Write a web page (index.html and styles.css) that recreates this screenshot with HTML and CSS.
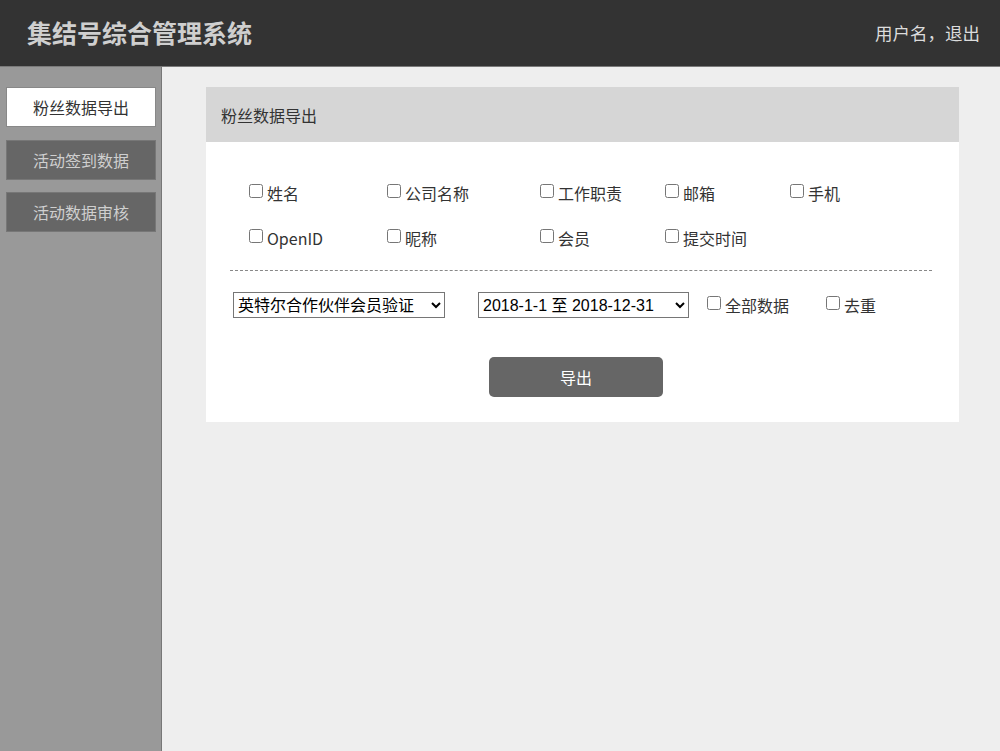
FILE: index.html
```html
<!DOCTYPE html>
<html lang="zh-CN">
<head>
<meta charset="utf-8">
<title>集结号综合管理系统</title>
<link rel="stylesheet" href="styles.css">
</head>
<body>
<header class="topbar">
  <div class="brand">集结号综合管理系统</div>
  <div class="user">用户名，退出</div>
</header>
<div class="layout">
  <nav class="sidebar">
    <a class="nav-item active">粉丝数据导出</a>
    <a class="nav-item">活动签到数据</a>
    <a class="nav-item">活动数据审核</a>
  </nav>
  <main class="main">
    <section class="panel">
      <div class="panel-head">粉丝数据导出</div>
      <div class="panel-body">
        <div class="fields">
          <label class="chk"><input type="checkbox">姓名</label>
          <label class="chk"><input type="checkbox">公司名称</label>
          <label class="chk"><input type="checkbox">工作职责</label>
          <label class="chk"><input type="checkbox">邮箱</label>
          <label class="chk"><input type="checkbox">手机</label>
          <label class="chk"><input type="checkbox">OpenID</label>
          <label class="chk"><input type="checkbox">昵称</label>
          <label class="chk"><input type="checkbox">会员</label>
          <label class="chk"><input type="checkbox">提交时间</label>
        </div>
        <div class="filters">
          <select class="sel sel-activity"><option>英特尔合作伙伴会员验证</option></select>
          <select class="sel sel-date"><option>2018-1-1 至 2018-12-31</option></select>
          <label class="chk chk-all"><input type="checkbox">全部数据</label>
          <label class="chk"><input type="checkbox">去重</label>
        </div>
        <div class="actions">
          <button class="btn">导出</button>
        </div>
      </div>
    </section>
  </main>
</div>
</body>
</html>
```
FILE: styles.css
```css
* { box-sizing: border-box; }
html, body { margin: 0; padding: 0; height: 100%; }
body {
  font-family: "Noto Sans CJK SC", "Noto Sans", sans-serif;
  background: #eeeeee;
  color: #333;
}
.topbar {
  height: 67px;
  background: #333333;
  border-bottom: 1px solid #7a7a7a;
  display: flex;
  align-items: center;
  justify-content: space-between;
  padding: 0 20px 2px 27px;
}
.brand {
  font-size: 25px;
  font-weight: bold;
  color: #cfcfcf;
}
.user {
  font-size: 17.5px;
  color: #dcdcdc;
}
.layout {
  display: flex;
  height: calc(100% - 67px);
}
.sidebar {
  width: 162px;
  background: #999999;
  border-right: 1px solid #777777;
  padding: 20px 5px 0 6px;
  display: flex;
  flex-direction: column;
  gap: 12.5px;
}
.nav-item {
  display: flex;
  align-items: center;
  justify-content: center;
  height: 40px;
  width: 150px;
  background: #666666;
  border: 1px solid #777777;
  color: #cfcfcf;
  font-size: 16px;
}
.nav-item.active {
  background: #ffffff;
  border-color: #888888;
  color: #333333;
}
.main {
  flex: 1;
  padding: 20px 41px 0 44px;
}
.panel {
  width: 753px;
  background: #ffffff;
}
.panel-head {
  height: 55px;
  background: #d6d6d6;
  display: flex;
  align-items: center;
  padding-left: 15px;
  font-size: 16px;
  color: #333;
}
.panel-body {
  padding: 28px 27px 25px 24px;
}
.fields {
  display: grid;
  grid-template-columns: 138px 153px 125px 125px auto;
  grid-auto-rows: 45px;
  padding-left: 19px;
  padding-bottom: 10px;
  border-bottom: 1px dashed #888888;
}
.chk {
  display: flex;
  align-items: center;
  font-size: 16px;
  color: #333;
  white-space: nowrap;
}
.chk input {
  width: 14px;
  height: 14px;
  margin: 0 4px 0 0;
  position: relative;
  top: -2px;
}
.filters {
  display: flex;
  align-items: center;
  height: 26px;
  margin-top: 21px;
  padding-left: 3px;
}
.sel {
  height: 26px;
  font-family: "Liberation Sans", "Noto Sans CJK SC", sans-serif;
  font-size: 16px;
  color: #000;
  background: #fff;
  border: 1px solid #767676;
  border-radius: 0;
}
.sel-activity { width: 212px; margin-right: 33px; }
.sel-date { width: 211px; margin-right: 18px; }
.chk-all { width: 119px; }
.actions {
  margin-top: 39px;
  padding-left: 259px;
}
.btn {
  width: 174px;
  height: 40px;
  background: #666666;
  color: #ffffff;
  border: none;
  border-radius: 5px;
  font-family: "Noto Sans CJK SC", sans-serif;
  font-size: 16px;
}
```
